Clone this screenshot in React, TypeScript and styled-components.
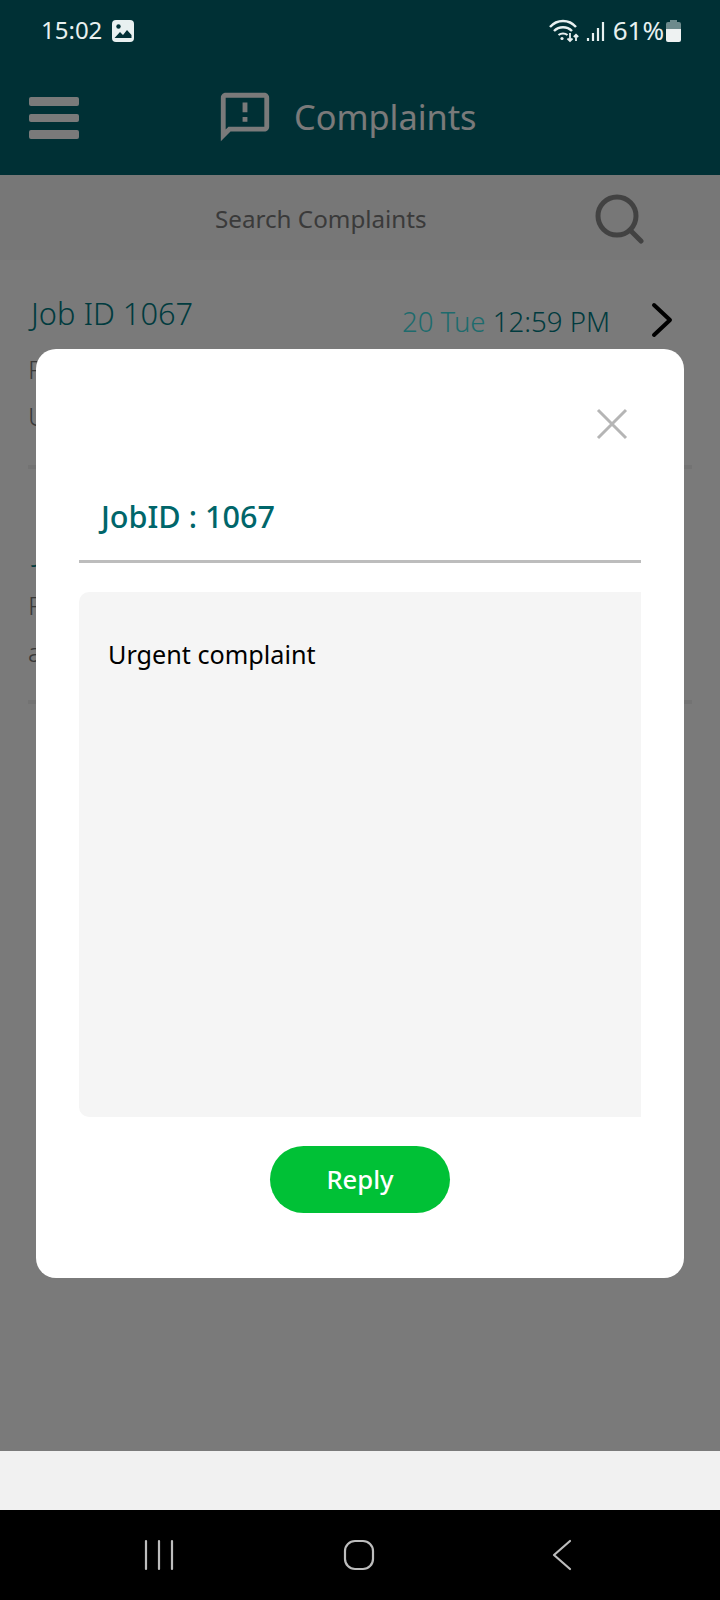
import React from "react";
import styled, { createGlobalStyle } from "styled-components";

const Global = createGlobalStyle`
  html, body { margin: 0; padding: 0; background: #f1f1f1; }
  * { box-sizing: border-box; }
  body { font-family: "Noto Sans", "Open Sans", sans-serif; }
`;

const Page = styled.div`
  position: relative;
  width: 720px;
  height: 1600px;
  display: flex;
  flex-direction: column;
  overflow: hidden;
  background: #f1f1f1;
`;

const Main = styled.div`
  height: 1451px;
  flex: none;
  display: flex;
  flex-direction: column;
  background: #fff;
`;

const StatusBar = styled.div`
  position: absolute;
  z-index: 3;
  left: 0;
  right: 0;
  top: 0;
  height: 60px;
  padding: 18px 39px 0 41px;
  display: flex;
  justify-content: space-between;
  align-items: flex-start;
  color: #e8f0f0;
  font-size: 24px;
  line-height: 24px;
`;

const StatusGroup = styled.div`
  display: flex;
  align-items: center;
  gap: 10px;
`;

const StatusGroupRight = styled(StatusGroup)`
  gap: 0;
`;

const StatusText = styled.span`
  margin-bottom: 2px;
`;

const Pct = styled.span`
  margin: 0 2px 2px 8px;
  font-size: 26px;
`;

const Top = styled.div`
  height: 175px;
  flex: none;
  background: #006570;
  display: flex;
  flex-direction: column;
`;

const Header = styled.header`
  flex: 1;
  padding: 60px 0 0 29px;
  display: flex;
  align-items: flex-start;
  color: #fff;
`;

const Burger = styled.div`
  width: 50px;
  margin-top: 37px;
  display: flex;
  flex-direction: column;
  gap: 8px;
`;

const BurgerBar = styled.div`
  height: 8.5px;
  border-radius: 2px;
  background: #fff;
`;

const HeaderIcon = styled.svg`
  width: 58px;
  height: 58px;
  margin: 28px 0 0 137px;
  fill: #fff;
`;

const Title = styled.h1`
  margin: 34px 0 0 20px;
  font-size: 34.3px;
  line-height: 46px;
  font-weight: 400;
`;

const SearchBar = styled.div`
  height: 85px;
  flex: none;
  display: flex;
  align-items: center;
  padding: 2px 0 0 215px;
  background: #f8f8f8;
`;

const SearchText = styled.div`
  width: 380px;
  font-size: 24.2px;
  font-weight: 400;
  color: #7a7a7a;
`;

const SearchIcon = styled.svg`
  width: 50px;
  height: 50px;
  fill: none;
  stroke: #8a8a8a;
  stroke-width: 5;
  stroke-linecap: round;
`;

const List = styled.div`
  flex: 1;
  padding: 0 28px;
`;

const Row = styled.div<{ $h: number; $pad: number }>`
  height: ${(p) => p.$h}px;
  border-bottom: 4px solid #f0f0f0;
  padding-top: ${(p) => p.$pad}px;
`;

const RowTop = styled.div`
  display: flex;
  align-items: flex-start;
  height: 47px;
`;

const JobId = styled.div<{ $indent: number }>`
  flex: 1;
  padding-left: ${(p) => p.$indent}px;
  font-size: 30.8px;
  line-height: 40px;
  font-weight: 300;
  color: #007c84;
`;

const DateWrap = styled.div`
  margin-top: 10px;
  font-size: 27.6px;
  line-height: 36px;
  font-weight: 300;
  color: #007c84;
`;

const DateDay = styled.span`
  color: #3fe0e4;
`;

const Chevron = styled.svg`
  width: 24px;
  height: 36px;
  margin: 9px 18px 0 40px;
  fill: none;
  stroke: #000;
  stroke-width: 4;
  stroke-linecap: round;
  stroke-linejoin: round;
`;

const RowLine = styled.div`
  font-size: 26px;
  line-height: 36px;
  margin-top: 11px;
  font-weight: 300;
  color: #777;
`;

const Footer = styled.div`
  height: 59px;
  flex: none;
  background: #f1f1f1;
`;

const Nav = styled.nav`
  flex: 1;
  background: #000;
  display: grid;
  grid-template-columns: 40px 40px 40px;
  column-gap: 160px;
  padding-left: 139px;
  align-items: center;
`;

const NavIcon = styled.svg`
  width: 40px;
  height: 40px;
  fill: none;
  stroke: #bdbdbd;
  stroke-width: 2.2;
  stroke-linecap: round;
  stroke-linejoin: round;
`;

const Backdrop = styled.div`
  position: absolute;
  z-index: 2;
  left: 0;
  top: 0;
  right: 0;
  height: 1451px;
  background: rgba(0, 0, 0, 0.52);
  padding: 349px 36px 0;
`;

const Modal = styled.div`
  height: 929px;
  background: #fff;
  border-radius: 20px;
  padding: 0 43px;
  display: flex;
  flex-direction: column;
`;

const CloseRow = styled.div`
  display: flex;
  justify-content: flex-end;
  padding: 59px 13px 0 0;
`;

const CloseIcon = styled.svg`
  width: 32px;
  height: 32px;
  fill: none;
  stroke: #b5b5b5;
  stroke-width: 3;
`;

const ModalTitle = styled.div`
  height: 123px;
  padding: 54px 0 0 22px;
  flex: none;
  border-bottom: 3px solid #bdbdbd;
  font-size: 30.6px;
  line-height: 44px;
  font-weight: 500;
  color: #00666a;
`;

const MessageBox = styled.div`
  height: 525px;
  margin-top: 29px;
  background: #f5f5f5;
  border-radius: 10px 0 0 10px;
  padding: 44px 29px;
  font-size: 25.2px;
  line-height: 36px;
  color: #000;
`;

const ButtonRow = styled.div`
  display: flex;
  justify-content: center;
  margin-top: 29px;
`;

const ReplyButton = styled.button`
  width: 180px;
  height: 67px;
  border: 0;
  border-radius: 34px;
  background: #00c136;
  color: #fff;
  font-family: inherit;
  font-size: 25.6px;
  font-weight: 500;
`;

export default function App() {
  return (
    <Page>
      <Global />
      <Main>
        <Top>
          <Header>
            <Burger>
              <BurgerBar />
              <BurgerBar />
              <BurgerBar />
            </Burger>
            <HeaderIcon viewBox="0 0 24 24">
              <path d="M20 2H4c-1.1 0-1.99.9-1.99 2L2 22l4-4h14c1.1 0 2-.9 2-2V4c0-1.1-.9-2-2-2zm0 14H5.17L4 17.17V4h16v12zM11 12h2v2h-2zm0-6h2v4h-2z" />
            </HeaderIcon>
            <Title>Complaints</Title>
          </Header>
        </Top>
        <SearchBar>
          <SearchText>Search Complaints</SearchText>
          <SearchIcon viewBox="0 0 50 50">
            <circle cx="22" cy="22" r="19" />
            <path d="M35 36 L46 47" />
          </SearchIcon>
        </SearchBar>
        <List>
          <Row $h={209} $pad={33}>
            <RowTop>
              <JobId $indent={3}>Job ID 1067</JobId>
              <DateWrap>
                <DateDay>20 Tue</DateDay> 12:59 PM
              </DateWrap>
              <Chevron viewBox="0 0 24 36">
                <path d="M4 3 L20 18 L4 33" />
              </Chevron>
            </RowTop>
            <RowLine>Fault</RowLine>
            <RowLine>Urgent complaint</RowLine>
          </Row>
          <Row $h={235} $pad={60}>
            <RowTop>
              <JobId $indent={6}>Job ID 1066</JobId>
            </RowTop>
            <RowLine>Fault</RowLine>
            <RowLine>a</RowLine>
          </Row>
        </List>
      </Main>
      <Footer />
      <Nav>
        <NavIcon viewBox="0 0 40 40">
          <path d="M7 6 V34 M20 6 V34 M33 6 V34" />
        </NavIcon>
        <NavIcon viewBox="0 0 40 40">
          <rect x="6" y="6" width="28" height="28" rx="10" />
        </NavIcon>
        <NavIcon viewBox="0 0 40 40">
          <path d="M31 6 L15 20 L31 34" />
        </NavIcon>
      </Nav>
      <StatusBar>
        <StatusGroup>
          <StatusText>15:02</StatusText>
          <svg width="22" height="22" viewBox="0 0 22 22">
            <rect width="22" height="22" rx="4" fill="#e8f0f0" />
            <circle cx="6.5" cy="6.5" r="2.2" fill="#023137" />
            <path d="M2.5 18 L8 12 L11 15 L15 10 L19.5 15 V18 Z" fill="#023137" />
          </svg>
        </StatusGroup>
        <StatusGroupRight>
          <svg width="56" height="24" viewBox="0 0 56 24" fill="none" stroke="#e8f0f0">
            <path d="M1 8 C8 0 20 0 27 8" strokeWidth="2.4" />
            <path d="M5 12 C10 7 18 7 23 12" strokeWidth="2.4" />
            <path d="M9.5 16 C12 14 16 14 18.5 16" strokeWidth="2.2" />
            <circle cx="13" cy="19.5" r="1.6" fill="#e8f0f0" stroke="none" />
            <path d="M21 14 V22 M18.5 19.5 L21 22 L23.5 19.5" strokeWidth="1.8" />
            <path d="M27 22 V16 M24.8 18 L27 15.8 L29.2 18" strokeWidth="1.8" />
            <path d="M39 22 V19 M44 22 V14 M49 22 V9 M54 22 V3" strokeWidth="2.2" />
          </svg>
          <Pct>61%</Pct>
          <svg width="15" height="22" viewBox="0 0 15 22">
            <path d="M4 0 H11 V2 H13 A2 2 0 0 1 15 4 V9 H0 V4 A2 2 0 0 1 2 2 H4 Z" fill="#6d8a8c" />
            <path d="M0 9 H15 V20 A2 2 0 0 1 13 22 H2 A2 2 0 0 1 0 20 Z" fill="#eef2f2" />
          </svg>
        </StatusGroupRight>
      </StatusBar>
      <Backdrop>
        <Modal>
          <CloseRow>
            <CloseIcon viewBox="0 0 32 32">
              <path d="M2 2 L30 30 M30 2 L2 30" />
            </CloseIcon>
          </CloseRow>
          <ModalTitle>JobID : 1067</ModalTitle>
          <MessageBox>Urgent complaint</MessageBox>
          <ButtonRow>
            <ReplyButton>Reply</ReplyButton>
          </ButtonRow>
        </Modal>
      </Backdrop>
    </Page>
  );
}
